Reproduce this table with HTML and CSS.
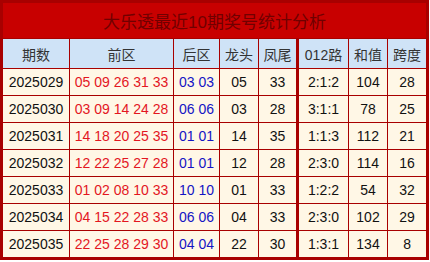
FILE: index.html
```html
<!DOCTYPE html>
<html lang="zh">
<head>
<meta charset="utf-8">
<link rel="stylesheet" href="styles.css">
</head>
<body>
<table class="stats">
  <colgroup>
    <col class="c-issue"><col class="c-front"><col class="c-back"><col class="c-head"><col class="c-tail"><col class="c-road"><col class="c-sum"><col class="c-span">
  </colgroup>
  <thead>
    <tr class="title-row"><th colspan="8">大乐透最近10期奖号统计分析</th></tr>
    <tr class="head-row">
      <th>期数</th><th>前区</th><th>后区</th><th>龙头</th><th class="split">凤尾</th><th>012路</th><th>和值</th><th>跨度</th>
    </tr>
  </thead>
  <tbody>
    <tr><td>2025029</td><td class="red">05 09 26 31 33</td><td class="blue">03 03</td><td>05</td><td class="split">33</td><td>2:1:2</td><td>104</td><td>28</td></tr>
    <tr><td>2025030</td><td class="red">03 09 14 24 28</td><td class="blue">06 06</td><td>03</td><td class="split">28</td><td>3:1:1</td><td>78</td><td>25</td></tr>
    <tr><td>2025031</td><td class="red">14 18 20 25 35</td><td class="blue">01 01</td><td>14</td><td class="split">35</td><td>1:1:3</td><td>112</td><td>21</td></tr>
    <tr><td>2025032</td><td class="red">12 22 25 27 28</td><td class="blue">01 01</td><td>12</td><td class="split">28</td><td>2:3:0</td><td>114</td><td>16</td></tr>
    <tr><td>2025033</td><td class="red">01 02 08 10 33</td><td class="blue">10 10</td><td>01</td><td class="split">33</td><td>1:2:2</td><td>54</td><td>32</td></tr>
    <tr><td>2025034</td><td class="red">04 15 22 28 33</td><td class="blue">06 06</td><td>04</td><td class="split">33</td><td>2:3:0</td><td>102</td><td>29</td></tr>
    <tr><td>2025035</td><td class="red">22 25 28 29 30</td><td class="blue">04 04</td><td>22</td><td class="split">30</td><td>1:3:1</td><td>134</td><td>8</td></tr>
  </tbody>
</table>
</body>
</html>
```
FILE: styles.css
```css
html, body {
  margin: 0;
  padding: 0;
  background: #ffffff;
}
.stats {
  border-collapse: collapse;
  table-layout: fixed;
  width: 429px;
  border: 3px solid #a80000;
  font-family: "Liberation Sans", "Noto Sans CJK SC", sans-serif;
  font-size: 14px;
  color: #111;
}
.c-issue { width: 68px; }
.c-front { width: 104px; }
.c-back { width: 46px; }
.c-head { width: 39px; }
.c-tail { width: 39px; }
.c-road { width: 51px; }
.c-sum { width: 39px; }
.c-span { width: 40px; }
.stats th, .stats td {
  border: 1px solid #a80000;
  padding: 0;
  text-align: center;
  white-space: nowrap;
  font-weight: normal;
}
.title-row th {
  height: 35px;
  background: #c80000;
  color: #700000;
  font-size: 17px;
}
.head-row th {
  height: 29px;
  background: #cfe3f7;
  color: #333;
  font-size: 14px;
}
.stats td {
  height: 26px;
  background: #fff7e6;
}
.stats .split {
  border-right: 3px solid #a80000;
}
.red { color: #e3161f; }
.blue { color: #1414c4; }
```
